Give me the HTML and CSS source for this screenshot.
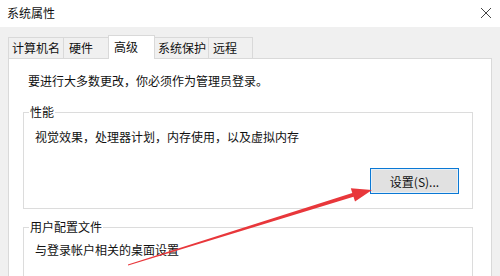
FILE: index.html
```html
<!DOCTYPE html>
<html lang="zh-CN">
<head>
<meta charset="utf-8">
<title>系统属性</title>
<link rel="stylesheet" href="styles.css">
</head>
<body>
<div class="window">
  <div class="titlebar">
    <span class="title">系统属性</span>
    <svg class="close" width="12" height="12" viewBox="0 0 12 12"><path d="M1 1L11 11M11 1L1 11" stroke="#444" stroke-width="1" fill="none"/></svg>
  </div>
  <div class="tabs">
    <div class="tab t1">计算机名</div>
    <div class="tab t2">硬件</div>
    <div class="tab t3 active">高级</div>
    <div class="tab t4">系统保护</div>
    <div class="tab t5">远程</div>
  </div>
  <div class="panel">
    <p class="note">要进行大多数更改，你必须作为管理员登录。</p>
    <fieldset class="group perf">
      <legend>性能</legend>
      <p class="desc">视觉效果，处理器计划，内存使用，以及虚拟内存</p>
      <div class="actions"><button class="btn">设置(S)...</button></div>
    </fieldset>
    <fieldset class="group profile">
      <legend>用户配置文件</legend>
      <p class="desc">与登录帐户相关的桌面设置</p>
    </fieldset>
  </div>
  <svg class="arrow" width="500" height="276" viewBox="0 0 500 276">
    <polygon fill="#e8373b" points="127.9,264.5 352.3,193.0 350.8,188.2 372,190 355.0,201.6 353.5,196.8 128.1,265.5"/>
  </svg>
</div>
</body>
</html>
```
FILE: styles.css
```css
html, body {
  margin: 0;
  padding: 0;
}
body {
  width: 500px;
  height: 276px;
  overflow: hidden;
  background: #f0f0f0;
  font-family: "Noto Sans CJK SC", "Microsoft YaHei", sans-serif;
  font-size: 12px;
  color: #111;
}
.window {
  position: relative;
  width: 500px;
  height: 276px;
  overflow: hidden;
}
.titlebar {
  height: 27px;
  background: #fff;
  display: flex;
  align-items: center;
  justify-content: space-between;
  padding: 0 7px 0 7px;
  box-sizing: border-box;
}
.title {
  line-height: 16px;
  margin-top: -2px;
}
.close {
  margin-top: -2px;
  margin-right: 1px;
}
.tabs {
  display: flex;
  align-items: flex-end;
  height: 31px;
  padding-left: 8px;
  position: relative;
  z-index: 2;
}
.tab {
  height: 21px;
  line-height: 19px;
  box-sizing: border-box;
  border: 1px solid #d9d9d9;
  border-bottom: none;
  background: #f0f0f0;
  margin-right: -1px;
  white-space: nowrap;
}
.t1 { width: 56px; padding-left: 3px; }
.t2 { width: 48px; padding-left: 5px; }
.t3 { width: 47px; padding-left: 5px; }
.t4 { width: 57px; padding-left: 5px; }
.t5 { width: 45px; padding-left: 4px; }
.tab.active {
  height: 24px;
  line-height: 21px;
  background: #fff;
  margin-left: -2px;
  margin-right: -3px;
  margin-bottom: -1px;
  position: relative;
  z-index: 3;
}
.panel {
  background: #fff;
  border: 1px solid #d9d9d9;
  margin-left: 8px;
  width: 484px;
  height: 240px;
  box-sizing: border-box;
  padding: 14px 18px 0 14px;
}
.note {
  margin: 0 0 0 5px;
  line-height: 16px;
}
.group {
  margin: 15px 0 0 0;
  padding: 0 13px 14px 11px;
  border: 1px solid #dcdcdc;
  min-width: 0;
}
.group legend {
  margin-left: -6px;
  padding: 0 1px;
  line-height: 16px;
}
.profile {
  margin-top: 10px;
  padding-bottom: 30px;
}
.desc {
  margin: 9px 0 0 0;
  line-height: 16px;
}
.profile .desc {
  margin-top: 7px;
}
.actions {
  display: flex;
  justify-content: flex-end;
  margin-top: 23px;
}
.btn {
  width: 89px;
  height: 26px;
  border: 1px solid #0a78d4;
  background: #e1e1e1;
  font-family: inherit;
  font-size: 12px;
  color: #111;
  padding: 0;
  box-shadow: inset 0 0 0 1px #e6f0f8;
}
.arrow {
  position: absolute;
  left: 0;
  top: 0;
  pointer-events: none;
}
```
